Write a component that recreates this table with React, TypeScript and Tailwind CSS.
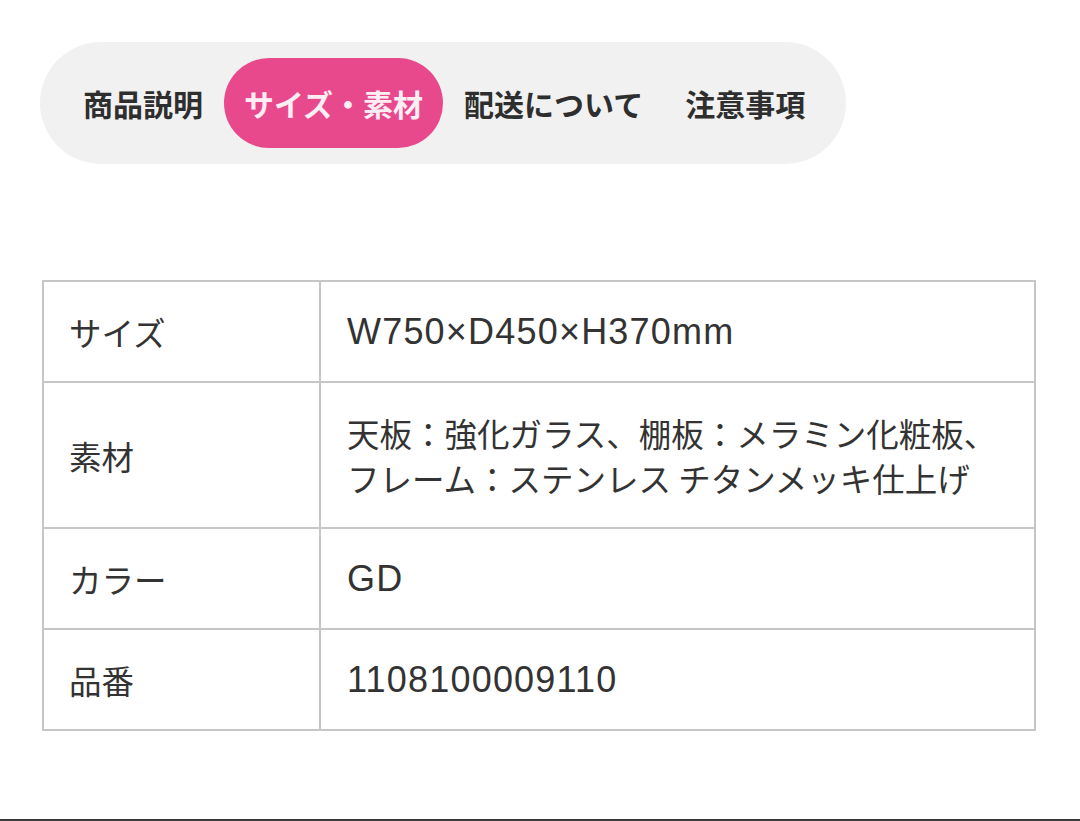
const tabs = ["商品説明", "サイズ・素材", "配送について", "注意事項"];

const rows: { label: string; value: string[]; latin?: boolean }[] = [
  { label: "サイズ", value: ["W750×D450×H370mm"], latin: true },
  {
    label: "素材",
    value: [
      "天板：強化ガラス、棚板：メラミン化粧板、",
      "フレーム：ステンレス チタンメッキ仕上げ",
    ],
  },
  { label: "カラー", value: ["GD"], latin: true },
  { label: "品番", value: ["1108100009110"], latin: true },
];

const App = () => {
  const active = 1;
  return (
    <div
      className="relative h-[821px] w-[1080px] overflow-hidden bg-white text-[#333]"
      style={{ fontFamily: '"Noto Sans CJK JP", "Liberation Sans", sans-serif' }}
    >
      <div className="ml-[40px] mt-[42px] inline-flex items-center rounded-full bg-[#f1f1f1] py-[16px] pl-[22px] pr-[20px]">
        {tabs.map((t, i) => (
          <div
            key={t}
            className={
              i === active
                ? "flex h-[90px] items-center rounded-full bg-[#e8498d] px-[20px] text-[30px] font-bold text-[#fdeef4]"
                : "flex h-[90px] items-center px-[21px] text-[30px] font-bold text-[#2e2e2e]"
            }
          >
            {t}
          </div>
        ))}
      </div>

      <table className="ml-[42px] mt-[116px] w-[994px] border-collapse">
        <tbody>
          {rows.map((r) => (
            <tr key={r.label}>
              <td className="w-[277px] border-2 border-[#c6c6c6] px-[25px] py-[27px] align-middle text-[32.5px] leading-[45px]">
                {r.label}
              </td>
              <td
                className={
                  r.latin
                    ? "border-2 border-[#c6c6c6] px-[26px] py-[27px] align-middle text-[36px] leading-[45px] tracking-[1.2px]"
                    : "border-2 border-[#c6c6c6] px-[26px] py-[27px] align-middle text-[32.5px] leading-[45px]"
                }
                style={
                  r.latin
                    ? { fontFamily: '"Liberation Sans", "Noto Sans CJK JP", sans-serif' }
                    : undefined
                }
              >
                {r.value.map((v) => (
                  <div key={v}>{v}</div>
                ))}
              </td>
            </tr>
          ))}
        </tbody>
      </table>

      <div className="absolute bottom-0 left-0 h-[2px] w-full bg-[#3a3a3a]" />
    </div>
  );
};

export default App;
